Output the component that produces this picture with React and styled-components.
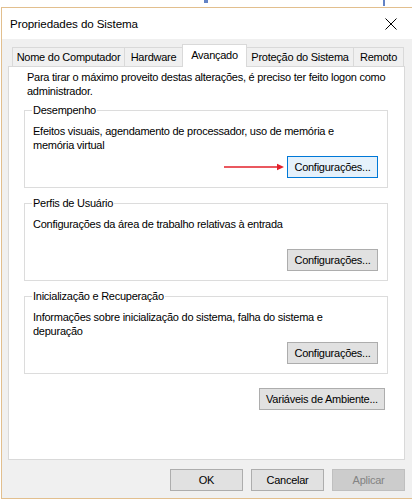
import styled, { createGlobalStyle } from 'styled-components';

const GlobalStyle = createGlobalStyle`
  html, body {
    margin: 0;
    padding: 0;
    background: #ffffff;
    overflow: hidden;
  }
  body {
    font-family: 'Liberation Sans', Arial, sans-serif;
    font-size: 11px;
    letter-spacing: -0.25px;
    color: #000;
  }
`;

const tabs = [
  { label: 'Nome do Computador', width: 113 },
  { label: 'Hardware', width: 59 },
  { label: 'Avançado', width: 65, selected: true },
  { label: 'Proteção do Sistema', width: 108 },
  { label: 'Remoto', width: 51 },
];

const groups = [
  {
    title: 'Desempenho',
    text: ['Efeitos visuais, agendamento de processador, uso de memória e', 'memória virtual'],
    focused: true,
  },
  {
    title: 'Perfis de Usuário',
    text: ['Configurações da área de trabalho relativas à entrada'],
  },
  {
    title: 'Inicialização e Recuperação',
    text: ['Informações sobre inicialização do sistema, falha do sistema e', 'depuração'],
  },
];

const CloseIcon = () => (
  <svg width="12" height="12" viewBox="0 0 12 12">
    <path d="M0.5 0.5 L11.5 11.5 M11.5 0.5 L0.5 11.5" stroke="#000" strokeWidth="1" fill="none" />
  </svg>
);

const RedArrow = () => (
  <svg width="60" height="8" viewBox="0 0 60 8">
    <line x1="0" y1="4" x2="54" y2="4" stroke="#e3202a" strokeWidth="1.6" />
    <path d="M53 0.8 L60 4 L53 7.2 Z" fill="#e3202a" />
  </svg>
);

const App = () => {
  return (
    <>
      <GlobalStyle />
      <Desktop>
        <Mark w={4} h={3} ml={204} />
        <Mark w={2} h={6} ml={175} />
      </Desktop>
      <Window>
        <TitleBar>
          <Title>Propriedades do Sistema</Title>
          <CloseIcon />
        </TitleBar>

        <Body>
          <TabRow>
            {tabs.map((tab) => (
              <Tab key={tab.label} w={tab.width} selected={tab.selected}>
                {tab.label}
              </Tab>
            ))}
          </TabRow>

          <Panel>
            <Intro>
              Para tirar o máximo proveito destas alterações, é preciso ter feito logon como
              <br />
              administrador.
            </Intro>

            {groups.map((group) => (
              <Group key={group.title}>
                <Legend>{group.title}</Legend>
                <GroupContent>
                  <Description>
                    {group.text.map((line) => (
                      <div key={line}>{line}</div>
                    ))}
                  </Description>
                  <ButtonRow>
                    {group.focused && <RedArrow />}
                    <Button w={91} focused={group.focused}>Configurações...</Button>
                  </ButtonRow>
                </GroupContent>
              </Group>
            ))}

            <EnvRow>
              <Button w={126}>Variáveis de Ambiente...</Button>
            </EnvRow>
          </Panel>

          <Footer>
            <Button w={73}>OK</Button>
            <Button w={73}>Cancelar</Button>
            <Button w={73} disabled>Aplicar</Button>
          </Footer>
        </Body>
      </Window>
    </>
  );
};

const Desktop = styled.div`
  height: 7px;
  display: flex;
  align-items: flex-start;
`;

const Mark = styled.span`
  width: ${(p) => p.w}px;
  height: ${(p) => p.h}px;
  margin-left: ${(p) => p.ml}px;
  background: #3b64b8;
  opacity: 0.8;
`;

const Window = styled.div`
  width: 418px;
  margin-left: 1px;
  border: 1px solid #e2bf8e;
  box-sizing: border-box;
  background: #f0f0f0;
`;

const TitleBar = styled.div`
  height: 31px;
  background: #ffffff;
  display: flex;
  align-items: center;
  justify-content: space-between;
  padding: 0 21px 0 8px;
`;

const Title = styled.span`
  font-size: 11.6px;
  letter-spacing: -0.1px;
  color: #000;
`;

const Body = styled.div`
  display: flex;
  flex-direction: column;
  padding: 5px 13px 7px 6px;
`;

const TabRow = styled.div`
  display: flex;
  align-items: flex-end;
  padding-left: 4px;
`;

const Tab = styled.div`
  width: ${(p) => p.w}px;
  height: ${(p) => (p.selected ? 23 : 19)}px;
  margin-right: -1px;
  margin-bottom: ${(p) => (p.selected ? -1 : 0)}px;
  box-sizing: border-box;
  border: 1px solid #d9d9d9;
  border-bottom: 0;
  background: ${(p) => (p.selected ? '#ffffff' : '#f0f0f0')};
  z-index: ${(p) => (p.selected ? 1 : 0)};
  display: flex;
  align-items: center;
  justify-content: center;
  padding-bottom: ${(p) => (p.selected ? 3 : 0)}px;
  white-space: nowrap;
`;

const Panel = styled.div`
  height: 394px;
  box-sizing: border-box;
  background: #ffffff;
  border: 1px solid #d9d9d9;
  padding: 3px 0 0 14px;
  display: flex;
  flex-direction: column;
`;

const Intro = styled.div`
  margin-left: 4px;
  line-height: 14px;
  white-space: nowrap;
`;

const Group = styled.fieldset`
  width: 364px;
  box-sizing: border-box;
  margin: 5px 0 3px 1px;
  padding: 0 9px 9px 8px;
  border: 1px solid #dcdcdc;
  min-width: 0;

  & + & {
    margin-top: 5px;
  }
`;

const Legend = styled.legend`
  padding: 0 1px;
  margin-left: -1px;
  line-height: 14px;
`;

const GroupContent = styled.div`
  height: 54px;
  margin-top: 7px;
  display: flex;
  flex-direction: column;
  justify-content: space-between;
`;

const Description = styled.div`
  line-height: 14px;
  white-space: nowrap;
`;

const ButtonRow = styled.div`
  display: flex;
  align-items: center;
  justify-content: flex-end;
  gap: 3px;
`;

const Button = styled.button`
  width: ${(p) => p.w}px;
  height: 22px;
  box-sizing: border-box;
  padding: 0;
  font-family: 'Liberation Sans', Arial, sans-serif;
  font-size: 11px;
  letter-spacing: -0.25px;
  color: ${(p) => (p.disabled ? '#838383' : '#000')};
  background: ${(p) => (p.focused ? '#e5f1fb' : p.disabled ? '#cccccc' : '#e1e1e1')};
  border: 1px solid ${(p) => (p.focused ? '#0078d7' : p.disabled ? '#bfbfbf' : '#adadad')};
  border-radius: 0;
`;

const EnvRow = styled.div`
  width: 362px;
  margin-top: 11px;
  display: flex;
  justify-content: flex-end;
`;

const Footer = styled.div`
  display: flex;
  justify-content: flex-end;
  gap: 8px;
  margin-top: 9px;
`;

export default App;
